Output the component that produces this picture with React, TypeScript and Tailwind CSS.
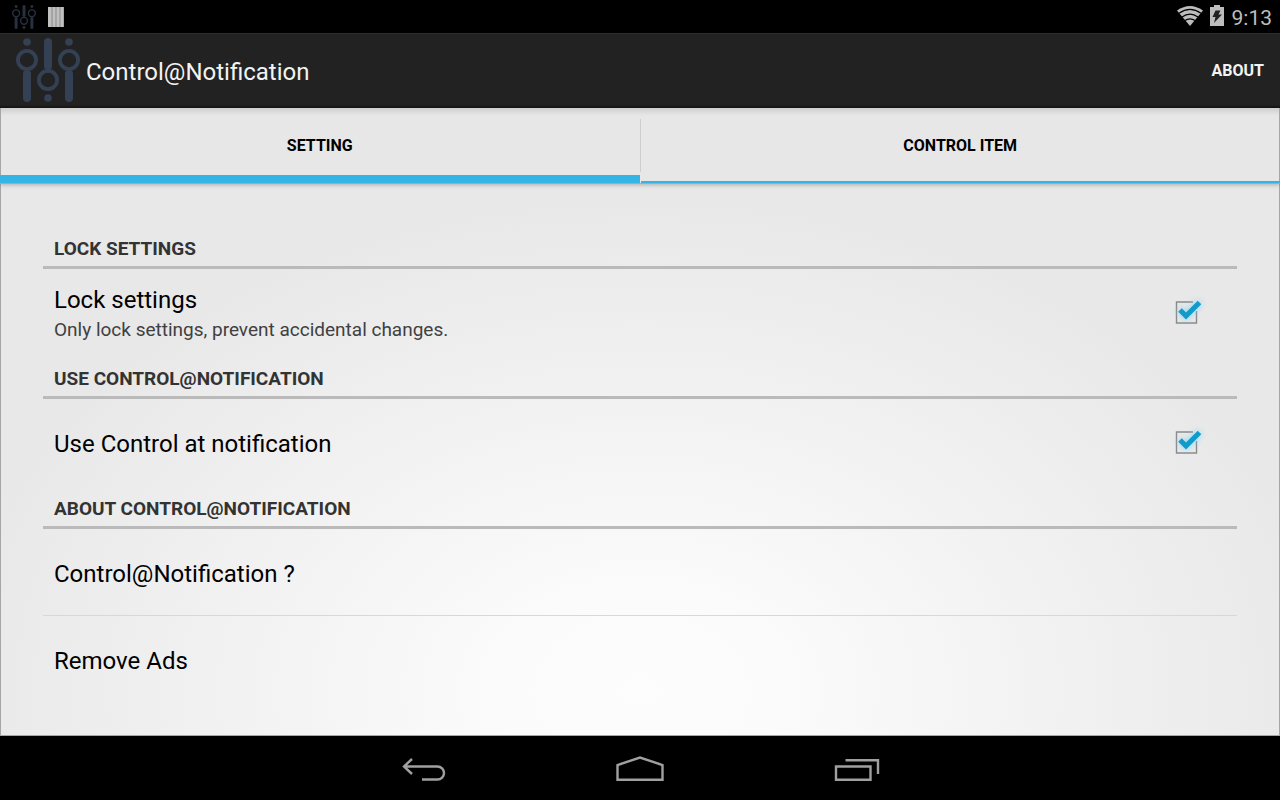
import React, { useState } from "react";

function SlidersLogo({ className }: { className?: string }) {
  return (
    <svg viewBox="0 0 64 64" fill="none" className={className} aria-hidden="true">
      <g fill="currentColor">
        <circle cx="11" cy="4" r="3.8" />
        <circle cx="53" cy="4" r="3.8" />
        <circle cx="32" cy="60" r="3.8" />
      </g>
      <g stroke="currentColor" strokeWidth="8" strokeLinecap="round">
        <path d="M11 36V60" />
        <path d="M53 36V60" />
        <path d="M32 4V28" />
      </g>
      <g stroke="currentColor" strokeWidth="3.8">
        <circle cx="11" cy="22" r="9.1" />
        <circle cx="53" cy="22" r="9.1" />
        <circle cx="32" cy="42" r="9.1" />
      </g>
    </svg>
  );
}

function BarsIcon() {
  return (
    <svg viewBox="0 0 16 20" className="h-5 w-4" aria-hidden="true">
      <path fill="#8a8a8a" d="M0 0h16v20H0z" />
      <path fill="#c0c0c0" d="M0 0h3.500v20H0zM4.500 0h3v20h-3zM8.500 0h3v20h-3zM12.500 0h3v20h-3z" />
    </svg>
  );
}

function WifiIcon() {
  return (
    <svg viewBox="0 0 26 20" className="h-5 w-6.5" aria-hidden="true">
      <path fill="#bdbdbd" d="M0 4.500Q13-4.500 26 4.500L13 20z" />
      <g fill="none" stroke="#000" strokeWidth="1.200">
        <path d="M2 7.200Q13 -0.400 24 7.200" />
        <path d="M5 11Q13 5.400 21 11" />
        <path d="M8 14.600Q13 11 18 14.600" />
      </g>
    </svg>
  );
}

function BatteryIcon() {
  return (
    <svg viewBox="0 0 14 21" className="h-[21px] w-3.5" aria-hidden="true">
      <path fill="#bdbdbd" d="M4 0h6v2h4v19H0V2h4z" />
      <path fill="#222" d="M5.500 5.500h5L8.500 9.500H12L4 18l1.500-6H2.500z" />
    </svg>
  );
}

function PreferenceHeading({ children }: { children: React.ReactNode }) {
  return (
    <h2 className="flex h-11 items-center border-b-3 border-[#bababa] px-[11px] pt-2 text-[19px] font-bold text-[#333]">
      {children}
    </h2>
  );
}

function CheckboxPreference({
  id,
  title,
  summary,
}: {
  id: string;
  title: string;
  summary?: string;
}) {
  const [checked, setChecked] = useState(true);

  return (
    <label htmlFor={id} className="flex h-[86px] items-center justify-between pt-1 pr-9 pl-[11px]">
      <span>
        <span className="block text-2xl leading-8 text-black">{title}</span>
        {summary && (
          <span className="block text-[19px] leading-7 text-[#404040]">{summary}</span>
        )}
      </span>
      <span className="relative mb-1 size-[26px]">
        <input
          id={id}
          type="checkbox"
          checked={checked}
          onChange={(e) => setChecked(e.target.checked)}
          className="absolute inset-0 size-full appearance-none"
        />
        <svg
          viewBox="0 0 26 26"
          className="pointer-events-none absolute inset-0 size-full overflow-visible"
          aria-hidden="true"
        >
          <path
            d={checked ? "M18 3H1.500V24H21.500V12" : "M21.500 3H1.500V24H21.500z"}
            fill="none"
            stroke="#8a8a8a"
            strokeWidth="1.400"
          />
          {checked && (
            <path
              d="M5 11L11 17L24.500 3.500"
              fill="none"
              stroke="#119bcb"
              strokeWidth="5"
              className="drop-shadow-[0_0_3px_#7fd3f2]"
            />
          )}
        </svg>
      </span>
    </label>
  );
}

function LinkPreference({ children }: { children: React.ReactNode }) {
  return (
    <button
      type="button"
      className="flex h-[86px] w-full items-center px-[11px] pt-1 text-left text-2xl leading-8 text-black"
    >
      {children}
    </button>
  );
}

export default function App() {
  return (
    <div className="flex min-h-screen flex-col bg-black font-['Roboto',sans-serif]">
      <div className="flex h-[33px] items-center justify-between pr-2 pl-3 text-[#bdbdbd]">
        <div className="flex items-center gap-3">
          <SlidersLogo className="size-6 text-[#26303e]" />
          <BarsIcon />
        </div>
        <div className="flex items-center gap-2">
          <div className="flex items-center gap-[7px] pb-0.5">
            <WifiIcon />
            <BatteryIcon />
          </div>
          <span className="pt-0.5 text-[21px] leading-8">9:13</span>
        </div>
      </div>

      <header className="flex h-[75px] items-center justify-between border-t border-b-2 border-t-[#2e2e2e] border-b-[#181818] bg-[#222] px-4">
        <div className="flex items-center gap-1.5">
          <SlidersLogo className="size-16 text-[#344155]" />
          <h1 className="pt-1 text-2xl text-[#f3f3f3]">Control@Notification</h1>
        </div>
        <button type="button" className="pt-0.5 text-base font-bold text-[#f3f3f3]">
          ABOUT
        </button>
      </header>

      <main className="flex-1 border-x border-b border-[#a6a6a6] bg-[radial-gradient(ellipse_700px_500px_at_50%_93%,#fdfdfd_0%,#fbfbfb_20%,#e8e8e8_100%)]">
        <nav className="-mx-px flex h-[76px] border-x border-b border-x-[#a6a6a6] border-b-[#aaa] bg-linear-to-b from-[#cfcfcf] to-[#e7e7e7] to-10% text-base font-bold text-black shadow-[0_1px_4px_#00000040]">
          <button type="button" className="-ml-px flex-1 border-b-8 border-[#33b5e5] pt-2">
            SETTING
          </button>
          <div className="mt-[11px] h-[53px] w-px bg-[#cecece]" />
          <button type="button" className="-mr-px flex-1 border-b-2 border-[#33b5e5] pt-0.5">
            CONTROL ITEM
          </button>
        </nav>

        <div className="px-[42px] pt-[41px] pb-8">
          <PreferenceHeading>LOCK SETTINGS</PreferenceHeading>
          <CheckboxPreference
            id="lock-settings"
            title="Lock settings"
            summary="Only lock settings, prevent accidental changes."
          />
          <PreferenceHeading>USE CONTROL@NOTIFICATION</PreferenceHeading>
          <CheckboxPreference id="use-control" title="Use Control at notification" />
          <PreferenceHeading>ABOUT CONTROL@NOTIFICATION</PreferenceHeading>
          <LinkPreference>Control@Notification ?</LinkPreference>
          <hr className="border-[#d8d8d8]" />
          <LinkPreference>Remove Ads</LinkPreference>
        </div>
      </main>

      <footer className="flex h-16 items-center justify-center gap-[169px] pt-1.5 text-[#a0a0a0]">
        <button type="button" aria-label="Back">
          <svg viewBox="0 0 48 32" className="h-8 w-12" fill="none" stroke="currentColor" strokeWidth="2.4">
            <path d="M13 4L5 11.500L13 19M5 11.500H38.500a6.500 6.500 0 0 1 0 13H23" />
          </svg>
        </button>
        <button type="button" aria-label="Home">
          <svg viewBox="0 0 48 32" className="h-8 w-12" fill="none" stroke="currentColor" strokeWidth="2.4">
            <path d="M1.500 24.700V10L24 2.500L46.500 10V24.700z" />
          </svg>
        </button>
        <button type="button" aria-label="Recent apps">
          <svg viewBox="0 0 48 32" className="h-8 w-12" fill="none" stroke="currentColor" strokeWidth="2.4">
            <path d="M3 11.500H37.500V24.700H3zM12.500 5.300H45V19" />
          </svg>
        </button>
      </footer>
    </div>
  );
}
